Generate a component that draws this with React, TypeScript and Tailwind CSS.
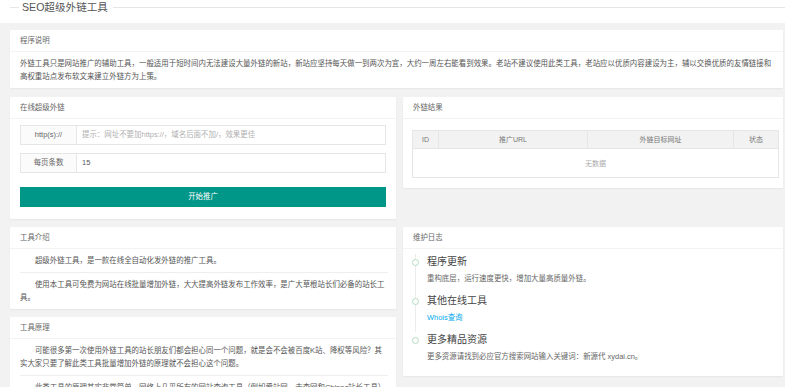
import React from 'react';

type CardProps = {
  title: string;
  className?: string;
  bodyClass?: string;
  children: React.ReactNode;
};

const Card: React.FC<CardProps> = ({ title, className = '', bodyClass = '', children }) => (
  <div className={`bg-white rounded-[1px] shadow-[0_1px_2px_0_rgba(0,0,0,0.05)] ${className}`}>
    <div className="h-[22px] leading-[22px] px-[10px] border-b border-[#f3f3f3] text-[7.45px] text-[#666]">{title}</div>
    <div className={bodyClass}>{children}</div>
  </div>
);

const logs = [
  { title: '程序更新', desc: '重构底层，运行速度更快，增加大量高质量外链。', link: false },
  { title: '其他在线工具', desc: 'Whois查询', link: true },
  { title: '更多精品资源', desc: '更多资源请找到必应官方搜索网站输入关键词：新源代 xydai.cn。', link: false },
];

export default function App() {
  return (
    <div className='w-[785px] min-h-[387px] bg-white text-[#555] font-[family-name:"Liberation_Sans","Noto_Sans_CJK_SC",sans-serif]'>
      {/* fieldset title */}
      <div className="h-[23px]">
        <div className="flex items-center h-[15px]">
          <div className="ml-[10px] w-[9px] h-px bg-[#e6e6e6]" />
          <span className="pl-[3px] pr-[5px] text-[10.6px] leading-[15px] text-[#555]">SEO超级外链工具</span>
          <div className="flex-1 h-px bg-[#e6e6e6]" />
        </div>
      </div>

      <div className="bg-[#f2f2f2] pt-[7px] pl-[10px] pr-[2px] pb-[10px]">
        <Card title="程序说明" className="mb-[9px]" bodyClass="pl-[10px] pr-[6px] py-[5px] text-[7.45px] leading-[13px] text-[#555]">
          外链工具只是网站推广的辅助工具，一般适用于短时间内无法建设大量外链的新站，新站应坚持每天做一到两次为宜，大约一周左右能看到效果。老站不建议使用此类工具，老站应以优质内容建设为主，辅以交换优质的友情链接和高权重站点发布软文来建立外链方为上策。
        </Card>

        <div className="grid grid-cols-[386px_380px] gap-x-[7px] items-start mb-[8px]">
          <Card title="在线超级外链" bodyClass="px-[10px] pt-[6px] pb-[12px]">
            <div className="flex h-[20px] mb-[8px]">
              <div className="w-[57px] shrink-0 border border-[#e6e6e6] bg-[#fbfbfb] text-center text-[7.45px] leading-[18px] text-[#666]">http(s)://</div>
              <input
                readOnly
                placeholder="提示：网址不要加https://，域名后面不加/，效果更佳"
                className="flex-1 min-w-0 border border-l-0 border-[#e6e6e6] pl-[5px] text-[7.45px] outline-none placeholder:text-[#b0b0b0]"
              />
            </div>
            <div className="flex h-[20px] mb-[9px]">
              <div className="w-[57px] shrink-0 border border-[#e6e6e6] bg-[#fbfbfb] text-center text-[7.45px] leading-[18px] text-[#666]">每页条数</div>
              <input
                readOnly
                defaultValue="15"
                className="flex-1 min-w-0 border border-l-0 border-[#e6e6e6] pl-[5px] text-[7.45px] text-[#555] outline-none"
              />
            </div>
            <button className="w-full h-[20px] bg-[#009688] text-white text-[7.45px] leading-[20px]">开始推广</button>
          </Card>

          <Card title="外链结果" bodyClass="pl-[9px] pr-[4px] pt-[11px] pb-[10px]">
            <div className="border border-[#e6e6e6] text-[7px] text-[#777]">
              <div className="grid grid-cols-[26px_149px_146px_1fr] h-[17px] bg-[#f2f2f2] leading-[17px] text-center">
                <div className="border-r border-[#e6e6e6]">ID</div>
                <div className="border-r border-[#e6e6e6]">推广URL</div>
                <div className="border-r border-[#e6e6e6]">外链目标网址</div>
                <div>状态</div>
              </div>
              <div className="h-[29px] leading-[29px] text-center text-[#aaa] border-t border-[#e6e6e6]">无数据</div>
            </div>
          </Card>
        </div>

        <div className="grid grid-cols-[386px_380px] gap-x-[7px] items-start">
          <div className="flex flex-col gap-[8px]">
            <Card title="工具介绍" bodyClass="pl-[10px] pr-[8px] py-[5px] text-[7.45px] leading-[13px] text-[#555]">
              <p className="indent-[2em]">超级外链工具，是一款在线全自动化发外链的推广工具。</p>
              <hr className="my-[5px] border-[#eee]" />
              <p className="indent-[2em]">使用本工具可免费为网站在线批量增加外链，大大提高外链发布工作效率，是广大草根站长们必备的站长工具。</p>
            </Card>
            <Card title="工具原理" bodyClass="pl-[10px] pr-[8px] py-[5px] text-[7.45px] leading-[13px] text-[#555]">
              <p className="indent-[2em]">可能很多第一次使用外链工具的站长朋友们都会担心同一个问题，就是会不会被百度K站、降权等风险？其实大家只要了解此类工具批量增加外链的原理就不会担心这个问题。</p>
              <hr className="my-[5px] border-[#eee]" />
              <p className="indent-[2em]">此类工具的原理其实非常简单，网络上几乎所有的网站查询工具（例如爱站网、去查网和Chinaz站长工具）都会在查询网站信息时留下查询记录，这些记录页面被搜索引擎收录后就形成了外链。</p>
            </Card>
          </div>

          <Card title="维护日志" bodyClass="px-[9px] pt-[5px] pb-[5px]">
            {logs.map((it, i) => (
              <div key={it.title} className="relative pl-[15px] pb-[8px]">
                {i < logs.length - 1 && <div className="absolute left-[3px] top-0 bottom-0 w-px bg-[#ececec]" />}
                <div className="absolute left-0 top-[4.5px] w-[7px] h-[7px] rounded-full border border-[#b3dcbf] bg-white" />
                <div className="text-[10px] leading-[16px] text-[#444]">{it.title}</div>
                <div className={`mt-[2px] text-[7.45px] leading-[13px] ${it.link ? 'text-[#01aaed]' : 'text-[#666]'}`}>{it.desc}</div>
              </div>
            ))}
          </Card>
        </div>
      </div>
    </div>
  );
}
